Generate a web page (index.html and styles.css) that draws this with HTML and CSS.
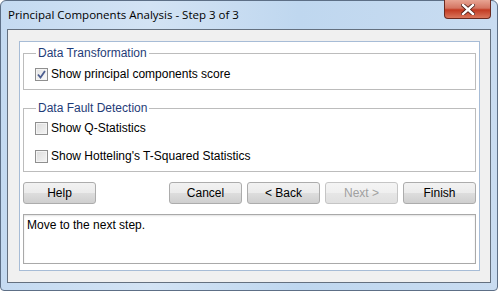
FILE: index.html
```html
<!DOCTYPE html>
<html lang="en">
<head>
    <meta charset="UTF-8">
    <title>Principal Components Analysis - Step 3 of 3</title>
    <link rel="stylesheet" href="styles.css">
</head>
<body>
    <div class="window">
        <div class="titlebar">
            <span class="title">Principal Components Analysis - Step 3 of 3</span>
            <div class="close-btn">
                <svg width="14" height="11" viewBox="0 0 14 11">
                    <path d="M2 1 L12 10 M12 1 L2 10" stroke="#4a1a14" stroke-width="4" stroke-linecap="square"/>
                    <path d="M2 1 L12 10 M12 1 L2 10" stroke="#ffffff" stroke-width="2.4" stroke-linecap="square"/>
                </svg>
            </div>
        </div>

        <div class="client">
            <div class="panel">
                <fieldset class="group">
                    <legend>Data Transformation</legend>
                    <label class="check-row">
                        <span class="checkbox checked">
                            <svg width="9" height="9" viewBox="0 0 9 9">
                                <path d="M1 4.5 L3.5 7.5 L8 1" fill="none" stroke="#4c5d8f" stroke-width="1.8"/>
                            </svg>
                        </span>
                        Show principal components score
                    </label>
                </fieldset>

                <fieldset class="group group-fault">
                    <legend>Data Fault Detection</legend>
                    <label class="check-row">
                        <span class="checkbox"></span>
                        Show Q-Statistics
                    </label>
                    <label class="check-row">
                        <span class="checkbox"></span>
                        Show Hotteling's T-Squared Statistics
                    </label>
                </fieldset>

                <div class="buttons">
                    <button class="btn">Help</button>
                    <div class="spacer"></div>
                    <button class="btn">Cancel</button>
                    <button class="btn">&lt; Back</button>
                    <button class="btn" disabled>Next &gt;</button>
                    <button class="btn">Finish</button>
                </div>

                <div class="message">Move to the next step.</div>
            </div>
        </div>
    </div>
</body>
</html>
```

FILE: styles.css
```css
body {
    margin: 0;
    background-color: #ffffff;
    font-family: "Liberation Sans", Arial, sans-serif;
    font-size: 12px;
    color: #000000;
}
.window {
    width: 498px;
    height: 291px;
    box-sizing: border-box;
    background: linear-gradient(to right, #c4daf1 0%, #d3e3f4 30%, #bfd7ef 60%, #c9dcf1 100%);
    border: 1px solid #5d6f86;
    border-radius: 6px 6px 4px 4px;
    display: flex;
    flex-direction: column;
}
.titlebar {
    height: 28px;
    display: flex;
    align-items: flex-start;
    justify-content: space-between;
    padding-left: 7px;
}
.title {
    font-family: "Open Sans", sans-serif;
    font-size: 11.5px;
    line-height: 28px;
    color: #000000;
}
.close-btn {
    width: 45px;
    height: 18px;
    margin-top: -1px;
    margin-right: 6px;
    border: 1px solid #6b2a20;
    border-top: none;
    border-radius: 0 0 4px 4px;
    background: linear-gradient(to bottom, #e8a493 0%, #d47562 45%, #c23a22 55%, #d9765c 100%);
    display: flex;
    align-items: center;
    justify-content: center;
}
.client {
    margin: 0 6px 0 6px;
    height: 254px;
    box-sizing: border-box;
    border: 1px solid #64707f;
    background-color: #f0f0f0;
    padding: 11px 10px 11px 11px;
}
.panel {
    height: 100%;
    box-sizing: border-box;
    border: 1px solid #a7bcd6;
    background-color: #ffffff;
    padding: 5px 3px 0 3px;
    font-family: "Liberation Sans", Arial, sans-serif;
    font-size: 12px;
}
.group {
    margin: 0;
    padding: 6px 0 7px 11px;
    border: 1px solid #bcbcbc;
    border-radius: 0;
}
.group legend {
    color: #1f3c78;
    padding: 0 2px;
    margin-left: 1px;
    line-height: 13px;
}
.group-fault {
    margin-top: 12px;
    padding-top: 5px;
}
.check-row {
    display: flex;
    align-items: center;
    gap: 3px;
    height: 16px;
}
.group-fault .check-row + .check-row {
    margin-top: 12px;
}
.checkbox {
    width: 11px;
    height: 11px;
    border: 1px solid #8f8f8f;
    background: linear-gradient(135deg, #dcdcdc 0%, #f4f4f4 100%);
    box-shadow: inset 0 0 0 1px #f4f4f4;
    display: flex;
    align-items: center;
    justify-content: center;
}
.checkbox.checked {
    background: linear-gradient(135deg, #e2e2e2 0%, #fbfbfb 100%);
}
.buttons {
    display: flex;
    gap: 5px;
    margin-top: 10px;
}
.spacer {
    flex: 1;
}
.btn {
    width: 73px;
    height: 22px;
    border: 1px solid #acacac;
    border-radius: 3px;
    background: linear-gradient(to bottom, #f2f2f2 0%, #ebebeb 50%, #dddddd 51%, #cfcfcf 100%);
    font-family: "Liberation Sans", Arial, sans-serif;
    font-size: 12px;
    color: #000000;
    padding: 0;
}
.btn:disabled {
    border-color: #c5c5c5;
    background: linear-gradient(to bottom, #f4f4f4 0%, #efefef 50%, #e6e6e6 51%, #e0e0e0 100%);
    color: #a0a0a0;
}
.message {
    margin-top: 10px;
    height: 50px;
    box-sizing: border-box;
    border: 1px solid #a9a9a9;
    box-shadow: inset 0 1px 2px #e2e2e2;
    padding: 3px 3px;
    font-size: 12px;
}
```
